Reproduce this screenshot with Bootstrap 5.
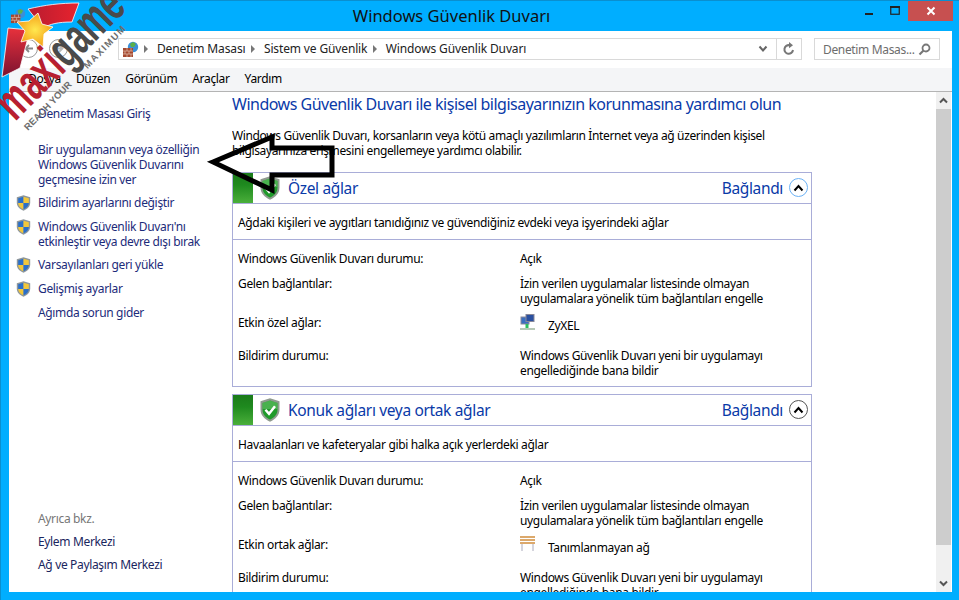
<!DOCTYPE html>
<html lang="tr"><head><meta charset="utf-8"><title>Windows Güvenlik Duvarı</title>
<link rel="stylesheet" href="https://cdn.jsdelivr.net/npm/bootstrap@5.3.0/dist/css/bootstrap.min.css">
<style>
html,body{height:600px;overflow:hidden}
body{background:#00aeff;font-family:"Noto Sans","Open Sans",sans-serif;font-size:12px;line-height:15px;color:#000;position:relative;letter-spacing:-.34px}
.frame-win{height:600px;padding:0 7px 8px 8px;border:1px solid #0a8fd0;border-bottom:0;border-right:0}
.title-row{height:30px;position:relative;flex:none}
.title-icon{position:absolute;left:1px;top:7px}
.title-text{font-size:16.5px;letter-spacing:0;line-height:30px;text-align:center;padding-right:58px;color:#111}
.win-btns{position:absolute;right:-1px;top:0;height:20px}
.win-min{width:27px;height:20px}
.win-max{width:26px;height:20px}
.win-close{width:45px;height:20px;background:#c75050}
.tool-row{height:37px;flex:none;background:#fff;padding:7px 12px 0 0}
.nav-circles{width:109px;padding-left:10px;gap:11px}
.nav-circle{width:19px;height:19px;border:1px solid #9a9a9a;border-radius:50%;margin-top:1px}
.addr{height:22px;border:1px solid #d9d9d9;flex:1;letter-spacing:-.14px}
.addr-icon{margin-left:3px}
.crumb{padding-left:9px;color:#222;margin-top:-2px}
.crumb-sep{width:0;height:0;border-left:4px solid #777;border-top:4px solid transparent;border-bottom:4px solid transparent;margin-left:5.5px}
.crumb-sep-first{margin-left:5px}
.refresh{width:25px;border-left:1px solid #d9d9d9;height:20px}
.search-box{width:126px;height:22px;border:1px solid #d9d9d9;margin-left:12px;padding-left:8px;color:#6d6d6d}
.menu-row{height:24px;flex:none;background:#f4f5f7;border-bottom:1px solid #b4b4b4;padding:3px 0 0 19px;gap:15px}
.main-row{flex:1;min-height:0}
.side-col{width:223px;flex:none;background:#fff;padding:14px 0 0 29px;color:#1c2b7a;overflow:hidden}
.side-item{position:relative;margin-bottom:8.6px}
.side-shield{position:absolute;left:-22px;top:0}
.side-gap{height:12px;flex:none}
.seealso{color:#777;margin-bottom:8px}
.side-end{color:#1a2660;margin-bottom:8px}
.side-last{margin-bottom:20px}
.content-col{flex:1;background:#fff;overflow:hidden;padding:1px 0 0 0;min-width:0}
.main-head{font-size:16px;line-height:22px;color:#0a3aa8;letter-spacing:-.5px;margin-bottom:13px;white-space:nowrap}
.intro{line-height:15px;width:570px;margin-bottom:14px;letter-spacing:-.37px}
.net-panel{width:580px;border:1px solid #a9add8;margin-bottom:7px}
.net-head{height:31px;border-bottom:1px solid #a9add8}
.green-tab{width:20px;background:linear-gradient(#1a7a1a,#1f8a1f 40%,#4aaf3a)}
.net-shield{margin:3px 0 0 7px}
.net-name{font-size:15.5px;letter-spacing:-.35px;color:#0a3aa8;margin-left:8px;line-height:31px}
.net-state{font-size:15.5px;letter-spacing:-.35px;color:#0a3aa8;line-height:31px;margin-right:6px}
.chev{width:19px;height:19px;border-radius:50%;margin:5px 3px 0 0;border:1px solid #6cb2f5;background:#fff}
.chev-dark{border-color:#555}
.net-desc{height:36px;border-bottom:1px solid #a9add8;padding:11px 0 0 5px}
.net-body{padding:11px 0 8px 5px}
.nrow{display:flex;margin-bottom:9px}
.nrow-first{margin-bottom:10px}
.nrow-icon{margin-bottom:15px}
.nlabel{width:282px;flex:none}
.net-icon{margin:-1px 13px 0 0}
.net-val{padding-top:3px}
.scroll-col{width:16px;flex:none;background:#f0f0f0;border-right:1px solid #fff}
.scroll-arrow{height:17px}
.scroll-thumb{height:436px;background:#cdcdcd}
.logo-over{position:absolute;left:0;top:0;width:150px;height:140px;pointer-events:none}
.logo-word{position:absolute;left:15px;top:79px;font-family:"Liberation Sans",sans-serif;font-weight:700;font-size:51px;line-height:51px;letter-spacing:0;color:#b81f30;transform-origin:0 43px;transform:rotate(-45deg) scaleX(.64);white-space:nowrap}
.logo-word2{color:#4a4a4a}
.logo-tag{position:absolute;left:28px;top:122px;font-family:"Liberation Sans",sans-serif;font-weight:700;font-size:9.5px;letter-spacing:0;line-height:11px;color:#6d6d6d;transform-origin:0 9px;transform:rotate(-46deg);white-space:nowrap}
.logo-tag2{letter-spacing:1.5px;margin-left:22px}
.arrow-over{position:absolute;left:205px;top:125px;pointer-events:none}
</style></head><body>
<svg width="0" height="0" class="position-absolute"><defs>
<symbol id="uac" viewBox="0 0 15 16"><path d="M7.500.3l6.700 2v5.200c0 4-2.800 6.700-6.700 8.200-3.900-1.500-6.700-4.200-6.700-8.200V2.300z" fill="#8e979c"/><path d="M2.200 3.300L7.500 1.700V8H2.200z" fill="#2a6fc9"/><path d="M7.500 1.700l5.300 1.600V8H7.500z" fill="#f2c73a"/><path d="M2.200 8h5.300v6.200C4.300 13 2.200 11 2.200 8z" fill="#f2c73a"/><path d="M7.500 8h5.300c0 3-2.100 5-5.300 6.200z" fill="#2a6fc9"/></symbol>
<symbol id="okshield" viewBox="0 0 20 24"><path d="M10 .3l9.500 3v8c0 6-4 10-9.500 12.400C4.500 21.300.5 17.300.5 11.300v-8z" fill="#8f9a8f"/><path d="M10 2.500l7.500 2.400v6.600c0 4.800-3 8-7.500 10.100C5.500 19.500 2.500 16.300 2.500 11.500V4.900z" fill="#1f9a2a"/><path d="M10 2.500l7.500 2.400v6.100H2.500V4.900z" fill="#6cc46c" opacity=".55"/><path d="M5.500 11.800l3.500 4 6-7.500" fill="none" stroke="#fff" stroke-width="2.500"/></symbol>
<symbol id="chevup" viewBox="0 0 11 8"><path d="M1.500 6.500l4-4.500 4 4.500" fill="none" stroke="#000" stroke-width="2"/></symbol>
<symbol id="brickglobe" viewBox="0 0 17 17"><circle cx="11" cy="6" r="5.200" fill="#3b8fd8"/><path d="M8 3l3-2 3 2-2 3-3 0z" fill="#5bb04a"/><rect x="1" y="7" width="10" height="9" fill="#a5482f"/><path d="M1 10h10M1 13h10M5 7v3M9 7v3M3 10v3M7 10v3M5 13v3M9 13v3" stroke="#e0c0b0" stroke-width=".7"/></symbol>
</defs></svg>
<div class="frame-win d-flex flex-column">
 <div class="title-row">
  <svg class="title-icon" width="16" height="16"><use href="#brickglobe"/></svg>
  <div class="title-text">Windows Güvenlik Duvarı</div>
  <div class="win-btns d-flex">
   <div class="win-min d-flex align-items-center justify-content-center"><svg width="10" height="10"><rect x="1" y="7" width="8" height="2" fill="#222"/></svg></div>
   <div class="win-max d-flex align-items-center justify-content-center"><svg width="12" height="10"><rect x="1.750" y=".75" width="8.500" height="7.500" fill="none" stroke="#222" stroke-width="1.200"/><rect x="1" y="0" width="10" height="2" fill="#222"/></svg></div>
   <div class="win-close d-flex align-items-center justify-content-center"><svg width="10" height="10"><path d="M1.500 1.500l7 7M8.500 1.500l-7 7" stroke="#fff" stroke-width="2"/></svg></div>
  </div>
 </div>
 <div class="tool-row d-flex">
  <div class="nav-circles d-flex">
   <div class="nav-circle d-flex align-items-center justify-content-center"><svg width="10" height="9" viewBox="0 0 10 9"><path d="M9 4.500H2M5 1L1.500 4.500 5 8" fill="none" stroke="#888" stroke-width="1.800"/></svg></div>
   <div class="nav-circle d-flex align-items-center justify-content-center"><svg width="10" height="9" viewBox="0 0 10 9"><path d="M1 4.500h7M5 1l3.500 3.500L5 8" fill="none" stroke="#bbb" stroke-width="1.800"/></svg></div>
  </div>
  <div class="addr d-flex align-items-center">
   <svg class="addr-icon" width="17" height="17"><use href="#brickglobe"/></svg>
   <span class="crumb-sep crumb-sep-first"></span><span class="crumb">Denetim Masası</span>
   <span class="crumb-sep"></span><span class="crumb">Sistem ve Güvenlik</span>
   <span class="crumb-sep"></span><span class="crumb">Windows Güvenlik Duvarı</span>
   <svg width="10" height="8" viewBox="0 0 10 8" class="ms-auto me-2"><path d="M1.500 1.500L5 5.500l3.500-4" fill="none" stroke="#666" stroke-width="2"/></svg>
   <div class="refresh d-flex align-items-center justify-content-center"><svg width="14" height="14" viewBox="0 0 14 14"><path d="M11 8a4.300 4.300 0 1 1-3.500-4.800" fill="none" stroke="#777" stroke-width="2"/><path d="M7 0l4 3.200-4 3z" fill="#777"/></svg></div>
  </div>
  <div class="search-box d-flex align-items-center"><span>Denetim Masas...</span><svg width="13" height="13" viewBox="0 0 13 13" class="ms-auto me-2"><circle cx="8" cy="5" r="3.500" fill="none" stroke="#777" stroke-width="1.800"/><path d="M5.500 7.500L1.500 11.500" stroke="#777" stroke-width="2.200"/></svg></div>
 </div>
 <div class="menu-row d-flex"><span>Dosya</span><span>Düzen</span><span>Görünüm</span><span>Araçlar</span><span>Yardım</span></div>
 <div class="main-row d-flex">
  <div class="side-col d-flex flex-column">
   <div class="side-item">Denetim Masası Giriş</div>
   <div class="side-gap"></div>
   <div class="side-item">Bir uygulamanın veya özelliğin<br>Windows Güvenlik Duvarını<br>geçmesine izin ver</div>
   <div class="side-item"><svg class="side-shield" width="15" height="16"><use href="#uac"/></svg>Bildirim ayarlarını değiştir</div>
   <div class="side-item"><svg class="side-shield" width="15" height="16"><use href="#uac"/></svg>Windows Güvenlik Duvarı'nı<br>etkinleştir veya devre dışı bırak</div>
   <div class="side-item"><svg class="side-shield" width="15" height="16"><use href="#uac"/></svg>Varsayılanları geri yükle</div>
   <div class="side-item"><svg class="side-shield" width="15" height="16"><use href="#uac"/></svg>Gelişmiş ayarlar</div>
   <div class="side-item">Ağımda sorun gider</div>
   <div class="mt-auto seealso">Ayrıca bkz.</div>
   <div class="side-end">Eylem Merkezi</div>
   <div class="side-end side-last">Ağ ve Paylaşım Merkezi</div>
  </div>
  <div class="content-col">
   <div class="main-head">Windows Güvenlik Duvarı ile kişisel bilgisayarınızın korunmasına yardımcı olun</div>
   <div class="intro">Windows Güvenlik Duvarı, korsanların veya kötü amaçlı yazılımların İnternet veya ağ üzerinden kişisel bilgisayarınıza erişmesini engellemeye yardımcı olabilir.</div>
   <div class="net-panel">
    <div class="net-head d-flex">
     <div class="green-tab"></div>
     <svg class="net-shield" width="20" height="24"><use href="#okshield"/></svg>
     <span class="net-name">Özel ağlar</span>
     <span class="net-state ms-auto">Bağlandı</span>
     <div class="chev d-flex align-items-center justify-content-center"><svg width="11" height="8"><use href="#chevup"/></svg></div>
    </div>
    <div class="net-desc">Ağdaki kişileri ve aygıtları tanıdığınız ve güvendiğiniz evdeki veya işyerindeki ağlar</div>
    <div class="net-body">
     <div class="nrow nrow-first"><div class="nlabel">Windows Güvenlik Duvarı durumu:</div><div>Açık</div></div>
     <div class="nrow"><div class="nlabel">Gelen bağlantılar:</div><div>İzin verilen uygulamalar listesinde olmayan<br>uygulamalara yönelik tüm bağlantıları engelle</div></div>
     <div class="nrow nrow-icon"><div class="nlabel">Etkin özel ağlar:</div><div class="d-flex"><svg class="net-icon" width="15" height="17" viewBox="0 0 15 17"><rect x="1" y="3" width="8" height="7" fill="#3a6fc0" stroke="#889"/><rect x="6" y="0.500" width="8" height="7" fill="#2a50a0" stroke="#889"/><path d="M7 10v4" stroke="#2fbf5f" stroke-width="3"/><path d="M0 15h15" stroke="#b6c8b6" stroke-width="2"/></svg><span class="net-val">ZyXEL</span></div></div>
     <div class="nrow mb-0"><div class="nlabel">Bildirim durumu:</div><div>Windows Güvenlik Duvarı yeni bir uygulamayı<br>engellediğinde bana bildir</div></div>
    </div>
   </div>
   <div class="net-panel">
    <div class="net-head d-flex">
     <div class="green-tab"></div>
     <svg class="net-shield" width="20" height="24"><use href="#okshield"/></svg>
     <span class="net-name">Konuk ağları veya ortak ağlar</span>
     <span class="net-state ms-auto">Bağlandı</span>
     <div class="chev chev-dark d-flex align-items-center justify-content-center"><svg width="11" height="8"><use href="#chevup"/></svg></div>
    </div>
    <div class="net-desc">Havaalanları ve kafeteryalar gibi halka açık yerlerdeki ağlar</div>
    <div class="net-body">
     <div class="nrow nrow-first"><div class="nlabel">Windows Güvenlik Duvarı durumu:</div><div>Açık</div></div>
     <div class="nrow"><div class="nlabel">Gelen bağlantılar:</div><div>İzin verilen uygulamalar listesinde olmayan<br>uygulamalara yönelik tüm bağlantıları engelle</div></div>
     <div class="nrow nrow-icon"><div class="nlabel">Etkin ortak ağlar:</div><div class="d-flex"><svg class="net-icon" width="15" height="17" viewBox="0 0 15 17"><path d="M0 0h15v2H0zM0 3h15v2H0zM0 6h15v2H0z" fill="#dca96c"/><path d="M2 8v7M13 8v7" stroke="#aab" stroke-width="1"/></svg><span class="net-val">Tanımlanmayan ağ</span></div></div>
     <div class="nrow mb-0"><div class="nlabel">Bildirim durumu:</div><div>Windows Güvenlik Duvarı yeni bir uygulamayı<br>engellediğinde bana bildir</div></div>
    </div>
   </div>
  </div>
  <div class="scroll-col d-flex flex-column">
   <div class="scroll-arrow d-flex align-items-center justify-content-center"><svg width="9" height="7" viewBox="0 0 9 7"><path d="M1 5.500l3.500-3.500 3.500 3.500" fill="none" stroke="#555" stroke-width="2"/></svg></div>
   <div class="scroll-thumb"></div>
   <div class="scroll-arrow mt-auto d-flex align-items-center justify-content-center"><svg width="9" height="7" viewBox="0 0 9 7"><path d="M1 1.500l3.500 3.500 3.500-3.500" fill="none" stroke="#555" stroke-width="2"/></svg></div>
  </div>
 </div>
</div>
<div class="logo-over">
 <svg width="150" height="140" viewBox="0 0 150 140" class="position-absolute top-0 start-0"><defs><linearGradient id="lg1" x1="0" y1="0" x2="0" y2="1"><stop offset="0" stop-color="#e8313c"/><stop offset="1" stop-color="#7c1230"/></linearGradient><linearGradient id="lg2" x1="0" y1="0" x2="1" y2="0"><stop offset="0" stop-color="#b81c30"/><stop offset="1" stop-color="#e8232e"/></linearGradient><radialGradient id="rg"><stop offset="0" stop-color="#ffe84f"/><stop offset="1" stop-color="#f5a11a"/></radialGradient></defs><path d="M8 28l22 2-10 38-18 9z" fill="url(#lg1)" stroke="#fff" stroke-width=".8"/><path d="M28 9C45 5 60 3 79 3l-7 19C58 22 50 24 43 28z" fill="url(#lg2)" stroke="#fff" stroke-width=".8"/><path d="M38 13l4 11 11 3-9 7-1 13-10-8-12 3 4-11-8-9 12-1z" fill="url(#rg)" stroke="#fff" stroke-width=".8"/></svg>
 <span class="logo-word">maxi<span class="logo-word2">game</span></span>
 <span class="logo-tag">REACH YOUR<span class="logo-tag2">MAXIMUM</span></span>
</div>
<svg class="arrow-over" width="150" height="80" viewBox="0 0 150 80"><path d="M8 37L67 12v11h60v27H67v15z" fill="none" stroke="#000" stroke-width="5"/></svg>
</body></html>
